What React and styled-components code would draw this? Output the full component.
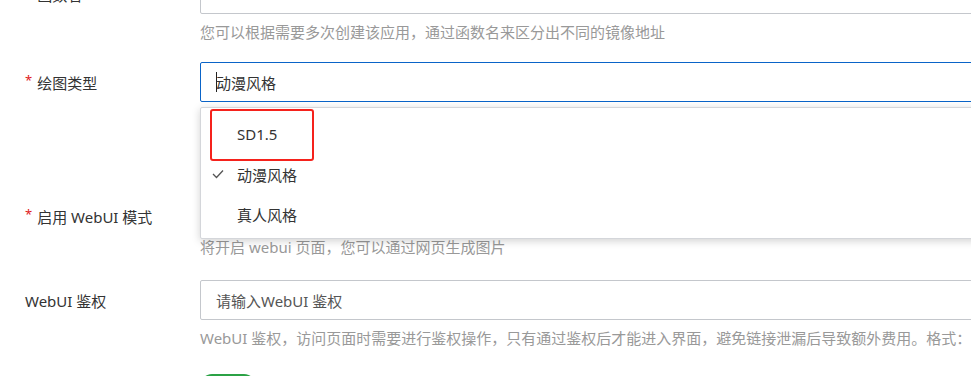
import React from 'react';
import styled, { createGlobalStyle } from "styled-components";

const GlobalStyle = createGlobalStyle`
    body {
        margin: 0;
        background: #ffffff;
        overflow: hidden;
        font-family: "Noto Sans", "Noto Sans CJK SC", sans-serif;
    }
`

const Form = styled.div`
    width: 1100px;
    margin-top: -26px;
`

const FormItem = styled.div`
    display: grid;
    grid-template-columns: 200px 900px;
    margin-bottom: ${p => p.$gap}px;
`

const Label = styled.div`
    height: 40px;
    display: flex;
    align-items: center;
    padding-left: 25px;
    font-size: 15px;
    color: #333333;
    white-space: nowrap;
`

const Required = styled.span`
    color: #e0201c;
    font-size: 13px;
    margin-right: 5px;
    position: relative;
    top: -2px;
`

const Control = styled.div`
    position: relative;
`

const Input = styled.div`
    height: 40px;
    box-sizing: border-box;
    border: 1px solid ${p => p.$focused ? '#0a64c8' : '#c4c7cc'};
    border-radius: 2px;
    display: flex;
    align-items: center;
    padding: 0 15px;
    font-size: 15px;
    color: ${p => p.$placeholder ? '#555555' : '#333333'};
    background: #ffffff;
`

const Caret = styled.span`
    width: 1px;
    height: 20px;
    background: #222222;
    margin-right: -1px;
`

const Help = styled.div`
    margin-top: ${p => p.$top}px;
    font-size: 15px;
    line-height: 20px;
    color: #999999;
    white-space: nowrap;
`

const SwitchRow = styled.div`
    height: 40px;
    display: flex;
    align-items: center;
`

const Switch = styled.div`
    width: 56px;
    height: 24px;
    border-radius: 12px;
    background: #2ba245;
`

const Dropdown = styled.div`
    position: absolute;
    left: 0;
    right: 0;
    top: 45px;
    z-index: 10;
    box-sizing: border-box;
    padding: 6px 0 4px;
    background: #ffffff;
    border: 1px solid #d4d6da;
    border-radius: 2px;
    box-shadow: 0 2px 8px rgba(0, 0, 0, 0.18);
`

const Option = styled.div`
    height: 40px;
    display: flex;
    align-items: center;
    padding-left: 36px;
    position: relative;
    font-size: 15px;
    color: #333333;
`

const CheckMark = styled.svg`
    position: absolute;
    left: 11px;
    top: 15px;
`

const Highlight = styled.div`
    position: absolute;
    left: 9px;
    top: 1px;
    width: 104px;
    height: 52px;
    box-sizing: border-box;
    border: 2.5px solid #f5221c;
    border-radius: 3px;
    pointer-events: none;
`

function App() {
    const options = [
        { label: "SD1.5" },
        { label: "动漫风格", checked: true },
        { label: "真人风格" },
    ]

    return (
        <>
            <GlobalStyle />
            <Form>
                <FormItem $gap={20}>
                    <Label><Required>*</Required>函数名</Label>
                    <Control>
                        <Input>sd</Input>
                        <Help $top={8}>您可以根据需要多次创建该应用，通过函数名来区分出不同的镜像地址</Help>
                    </Control>
                </FormItem>

                <FormItem $gap={94}>
                    <Label><Required>*</Required>绘图类型</Label>
                    <Control>
                        <Input $focused><Caret />动漫风格</Input>
                        <Dropdown>
                            {options.map(option => (
                                <Option key={option.label}>
                                    {option.checked && (
                                        <CheckMark width="12" height="10" viewBox="0 0 12 10">
                                            <polyline points="1,5 4.5,8.5 11,1.5" fill="none" stroke="#555555" strokeWidth="1.3" />
                                        </CheckMark>
                                    )}
                                    {option.label}
                                </Option>
                            ))}
                            <Highlight />
                        </Dropdown>
                    </Control>
                </FormItem>

                <FormItem $gap={23}>
                    <Label><Required>*</Required>启用 WebUI 模式</Label>
                    <Control>
                        <SwitchRow><Switch /></SwitchRow>
                        <Help $top={1}>将开启 webui 页面，您可以通过网页生成图片</Help>
                    </Control>
                </FormItem>

                <FormItem $gap={18}>
                    <Label>WebUI 鉴权</Label>
                    <Control>
                        <Input $placeholder>请输入WebUI 鉴权</Input>
                        <Help $top={8}>WebUI 鉴权，访问页面时需要进行鉴权操作，只有通过鉴权后才能进入界面，避免链接泄漏后导致额外费用。格式：'用户名:密码'</Help>
                    </Control>
                </FormItem>

                <FormItem $gap={20}>
                    <Label>启用 API 模式</Label>
                    <Control>
                        <SwitchRow><Switch /></SwitchRow>
                    </Control>
                </FormItem>
            </Form>
        </>
    );
}

export default App;
